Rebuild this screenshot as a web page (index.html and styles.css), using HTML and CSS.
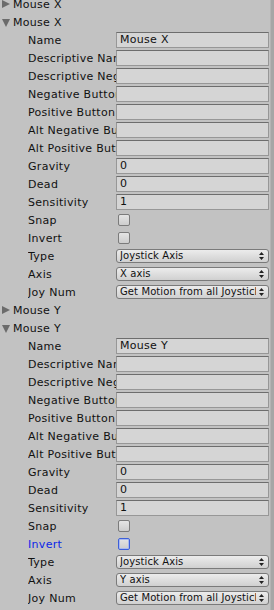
FILE: index.html
```html
<!DOCTYPE html>
<html>
<head>
  <meta charset="utf-8"/>
  <link rel="stylesheet" href="styles.css">
</head>
<body>
  <div class="inspector">
    <div class="list">
      <div class="head"><span class="tri closed"></span>Mouse X</div>

      <div class="head"><span class="tri open"></span>Mouse X</div>
      <div class="props">
        <div class="row"><span class="label">Name</span><div class="field">Mouse X</div></div>
        <div class="row"><span class="label">Descriptive Name</span><div class="field"></div></div>
        <div class="row"><span class="label">Descriptive Negative Name</span><div class="field"></div></div>
        <div class="row"><span class="label">Negative Button</span><div class="field"></div></div>
        <div class="row"><span class="label">Positive Button</span><div class="field"></div></div>
        <div class="row"><span class="label">Alt Negative Button</span><div class="field"></div></div>
        <div class="row"><span class="label">Alt Positive Button</span><div class="field"></div></div>
        <div class="row"><span class="label">Gravity</span><div class="field">0</div></div>
        <div class="row"><span class="label">Dead</span><div class="field">0</div></div>
        <div class="row"><span class="label">Sensitivity</span><div class="field">1</div></div>
        <div class="row"><span class="label">Snap</span><div class="check"></div></div>
        <div class="row"><span class="label">Invert</span><div class="check"></div></div>
        <div class="row"><span class="label">Type</span><div class="popup"><span class="value">Joystick Axis</span><svg class="arrows" width="5" height="8" viewBox="0 0 5 8"><path d="M2.5 0L5 3H0zM2.5 8L5 5H0z" fill="#222"/></svg></div></div>
        <div class="row"><span class="label">Axis</span><div class="popup"><span class="value">X axis</span><svg class="arrows" width="5" height="8" viewBox="0 0 5 8"><path d="M2.5 0L5 3H0zM2.5 8L5 5H0z" fill="#222"/></svg></div></div>
        <div class="row"><span class="label">Joy Num</span><div class="popup"><span class="value">Get Motion from all Joysticks</span><svg class="arrows" width="5" height="8" viewBox="0 0 5 8"><path d="M2.5 0L5 3H0zM2.5 8L5 5H0z" fill="#222"/></svg></div></div>
      </div>

      <div class="head"><span class="tri closed"></span>Mouse Y</div>

      <div class="head"><span class="tri open"></span>Mouse Y</div>
      <div class="props">
        <div class="row"><span class="label">Name</span><div class="field">Mouse Y</div></div>
        <div class="row"><span class="label">Descriptive Name</span><div class="field"></div></div>
        <div class="row"><span class="label">Descriptive Negative Name</span><div class="field"></div></div>
        <div class="row"><span class="label">Negative Button</span><div class="field"></div></div>
        <div class="row"><span class="label">Positive Button</span><div class="field"></div></div>
        <div class="row"><span class="label">Alt Negative Button</span><div class="field"></div></div>
        <div class="row"><span class="label">Alt Positive Button</span><div class="field"></div></div>
        <div class="row"><span class="label">Gravity</span><div class="field">0</div></div>
        <div class="row"><span class="label">Dead</span><div class="field">0</div></div>
        <div class="row"><span class="label">Sensitivity</span><div class="field">1</div></div>
        <div class="row"><span class="label">Snap</span><div class="check"></div></div>
        <div class="row focus"><span class="label">Invert</span><div class="check"></div></div>
        <div class="row"><span class="label">Type</span><div class="popup"><span class="value">Joystick Axis</span><svg class="arrows" width="5" height="8" viewBox="0 0 5 8"><path d="M2.5 0L5 3H0zM2.5 8L5 5H0z" fill="#222"/></svg></div></div>
        <div class="row"><span class="label">Axis</span><div class="popup"><span class="value">Y axis</span><svg class="arrows" width="5" height="8" viewBox="0 0 5 8"><path d="M2.5 0L5 3H0zM2.5 8L5 5H0z" fill="#222"/></svg></div></div>
        <div class="row"><span class="label">Joy Num</span><div class="popup"><span class="value">Get Motion from all Joysticks</span><svg class="arrows" width="5" height="8" viewBox="0 0 5 8"><path d="M2.5 0L5 3H0zM2.5 8L5 5H0z" fill="#222"/></svg></div></div>
      </div>
    </div>
    <div class="edge"></div>
  </div>
</body>
</html>
```

FILE: styles.css
```css
body {
  margin: 0;
  background: #c2c2c2;
  font-family: "DejaVu Sans", Verdana, sans-serif;
  font-size: 11px;
  letter-spacing: 0.3px;
  color: #111;
  overflow: hidden;
}
.inspector {
  display: flex;
  height: 610px;
  overflow: hidden;
}
.list {
  flex: 1;
  margin-top: -5px;
  padding-right: 1px;
  min-width: 0;
}
.edge {
  width: 3px;
  background: #a6a6a6;
  border-left: 1px solid #b4b4b4;
}
.head {
  height: 18px;
  display: flex;
  align-items: center;
  padding-left: 2px;
}
.tri {
  width: 0;
  height: 0;
  margin-right: 3px;
}
.tri.closed {
  border-top: 4px solid transparent;
  border-bottom: 4px solid transparent;
  border-left: 8px solid #6b6b6b;
}
.tri.open {
  border-left: 4px solid transparent;
  border-right: 4px solid transparent;
  border-top: 8px solid #6b6b6b;
  margin-top: 1px;
}
.row {
  height: 18px;
  display: flex;
  align-items: center;
}
.label {
  width: 88px;
  margin-left: 28px;
  white-space: nowrap;
  overflow: hidden;
  flex-shrink: 0;
}
.focus .label { color: #0b27e8; }
.field {
  flex: 1;
  height: 14px;
  line-height: 14px;
  padding-left: 3px;
  background: #d5d5d5;
  border: 1px solid #979797;
  border-top-color: #6d6d6d;
  white-space: nowrap;
  overflow: hidden;
}
.check {
  width: 10px;
  height: 10px;
  margin-left: 2px;
  border: 1px solid #7b7b7b;
  border-radius: 2px;
  background: linear-gradient(#e4e4e4, #cdcdcd);
}
.focus .check {
  border-color: #3d5fd9;
  box-shadow: inset 0 0 0 1px #a9b9ef;
}
.popup {
  flex: 1;
  min-width: 0;
  height: 12px;
  display: flex;
  align-items: center;
  padding: 0 4px 0 3px;
  border: 1px solid #7a7a7a;
  border-radius: 3px;
  background: linear-gradient(#ececec, #d0d0d0);
  font-size: 10px;
  letter-spacing: 0.1px;
}
.value {
  flex: 1;
  min-width: 0;
  white-space: nowrap;
  overflow: hidden;
  line-height: 12px;
}
.arrows {
  flex-shrink: 0;
  margin-left: 3px;
}
```
